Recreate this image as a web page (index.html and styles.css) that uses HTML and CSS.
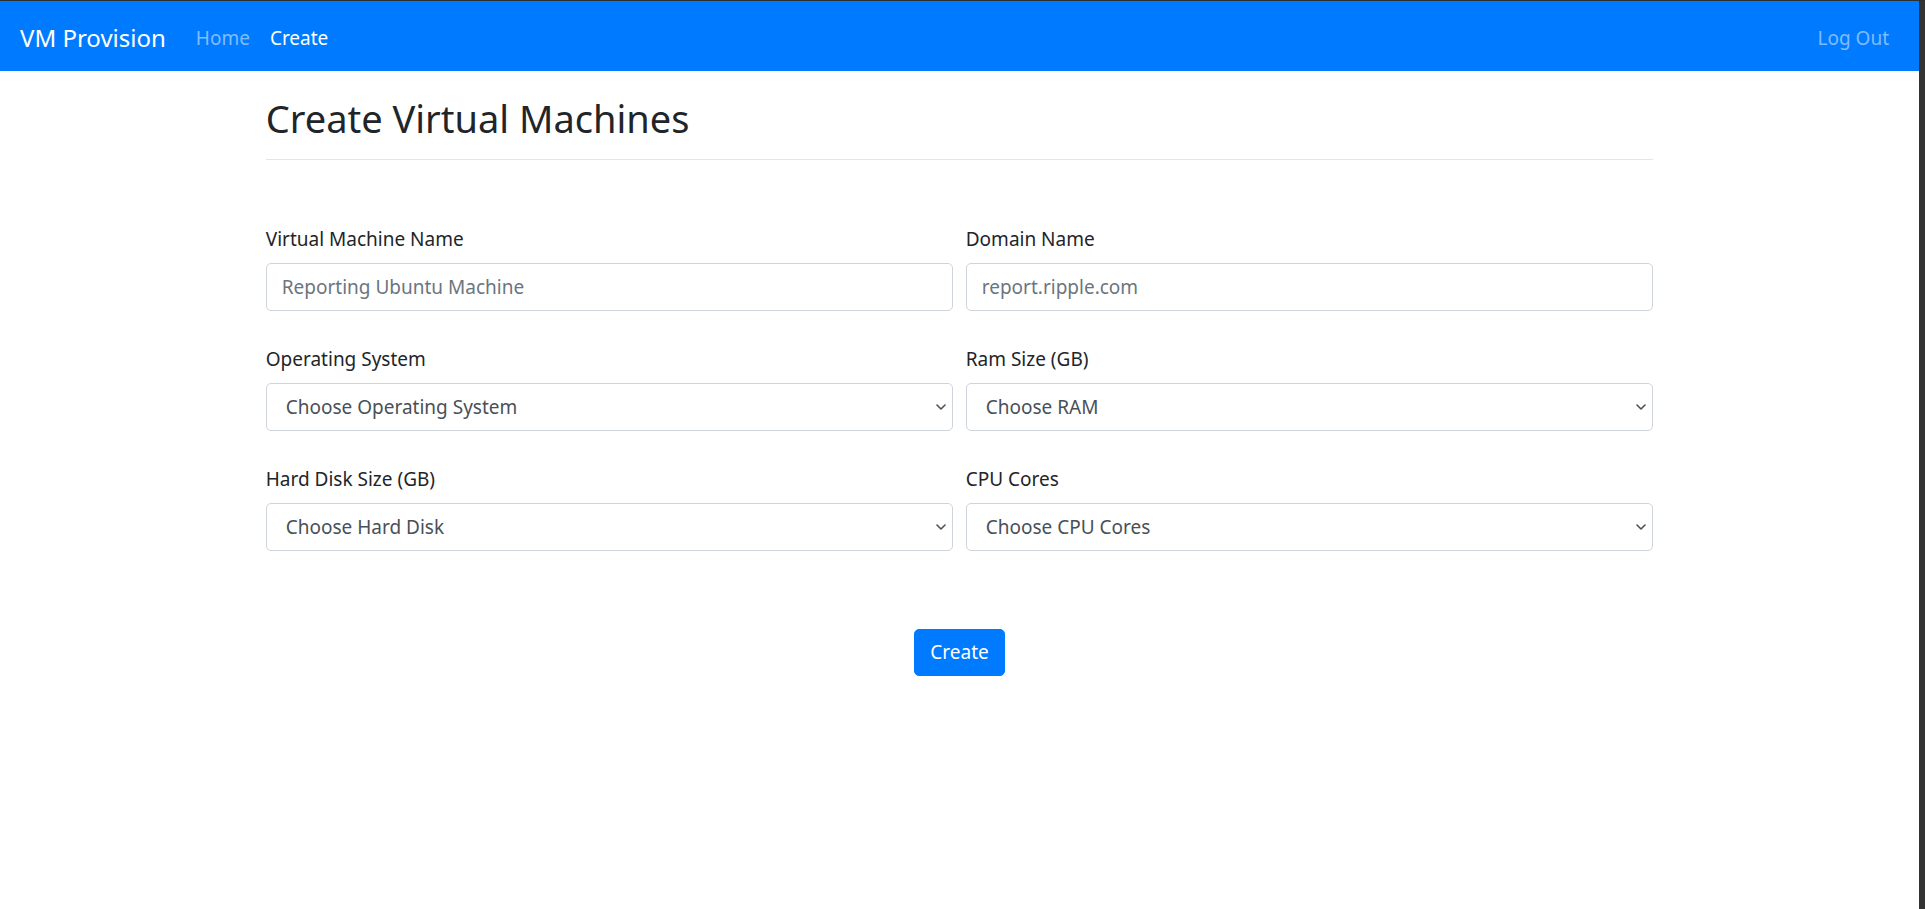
FILE: index.html
```html
<!DOCTYPE html>
<html lang="en">
<head>
<meta charset="utf-8">
<title>VM Provision</title>
<link rel="stylesheet" href="styles.css">
</head>
<body>
<div class="page">
  <nav class="navbar">
    <a class="brand" href="#">VM Provision</a>
    <a class="nav-link" href="#">Home</a>
    <a class="nav-link active" href="#">Create</a>
    <span class="spacer"></span>
    <a class="nav-link" href="#">Log Out</a>
  </nav>
  <main class="container">
    <h2 class="title">Create Virtual Machines</h2>
    <hr class="rule">
    <form class="form">
      <div class="grid">
        <div class="group">
          <label class="label" for="vmname">Virtual Machine Name</label>
          <input class="control" id="vmname" type="text" placeholder="Reporting Ubuntu Machine">
        </div>
        <div class="group">
          <label class="label" for="domain">Domain Name</label>
          <input class="control" id="domain" type="text" placeholder="report.ripple.com">
        </div>
        <div class="group">
          <label class="label" for="os">Operating System</label>
          <div class="select-wrap">
            <select class="control select" id="os"><option>Choose Operating System</option></select>
            <svg class="chev" viewBox="0 0 10 6" width="10" height="6"><path d="M1 1 L5 5 L9 1" fill="none" stroke="#495057" stroke-width="1.6" stroke-linecap="round" stroke-linejoin="round"/></svg>
          </div>
        </div>
        <div class="group">
          <label class="label" for="ram">Ram Size (GB)</label>
          <div class="select-wrap">
            <select class="control select" id="ram"><option>Choose RAM</option></select>
            <svg class="chev" viewBox="0 0 10 6" width="10" height="6"><path d="M1 1 L5 5 L9 1" fill="none" stroke="#495057" stroke-width="1.6" stroke-linecap="round" stroke-linejoin="round"/></svg>
          </div>
        </div>
        <div class="group">
          <label class="label" for="hdd">Hard Disk Size (GB)</label>
          <div class="select-wrap">
            <select class="control select" id="hdd"><option>Choose Hard Disk</option></select>
            <svg class="chev" viewBox="0 0 10 6" width="10" height="6"><path d="M1 1 L5 5 L9 1" fill="none" stroke="#495057" stroke-width="1.6" stroke-linecap="round" stroke-linejoin="round"/></svg>
          </div>
        </div>
        <div class="group">
          <label class="label" for="cpu">CPU Cores</label>
          <div class="select-wrap">
            <select class="control select" id="cpu"><option>Choose CPU Cores</option></select>
            <svg class="chev" viewBox="0 0 10 6" width="10" height="6"><path d="M1 1 L5 5 L9 1" fill="none" stroke="#495057" stroke-width="1.6" stroke-linecap="round" stroke-linejoin="round"/></svg>
          </div>
        </div>
      </div>
      <div class="actions">
        <button class="btn" type="button">Create</button>
      </div>
    </form>
  </main>
</div>
<div class="rail"></div>
</body>
</html>
```
FILE: styles.css
```css
* { box-sizing: border-box; }
html, body { margin: 0; padding: 0; }
body {
  display: flex;
  min-height: 100vh;
  border-top: 1px solid #2e2e2e;
  background: #fff;
  font-family: "Noto Sans", "Open Sans", sans-serif;
  font-size: 19px;
  color: #212529;
}
.page { flex: 1; min-width: 0; }
.rail { width: 6px; background: #333333; flex: none; }

.navbar {
  height: 70px;
  background: #007bff;
  display: flex;
  align-items: center;
  padding: 3px 20px 0;
}
.brand {
  color: #fff;
  font-size: 24px;
  line-height: 38px;
  text-decoration: none;
  margin-right: 20px;
}
.nav-link {
  color: rgba(255,255,255,.5);
  text-decoration: none;
  padding: 0 10px;
  font-size: 19px;
  line-height: 30px;
}
.nav-link.active { color: #fff; }
.spacer { flex: 1; }

.container {
  max-width: 1425px;
  margin: 0 auto;
  padding: 0 18.75px;
}
.title {
  margin: 23px 0 17px;
  font-size: 38px;
  line-height: 48px;
  font-weight: 400;
}
.rule {
  margin: 0;
  border: 0;
  border-top: 1px solid rgba(0,0,0,.1);
}
.form { padding-top: 64px; }
.grid {
  display: grid;
  grid-template-columns: 1fr 1fr;
  column-gap: 12.5px;
  row-gap: 33.5px;
}
.group { display: flex; flex-direction: column; }
.label {
  line-height: 30px;
  margin-bottom: 9px;
}
.control {
  height: 47.5px;
  width: 100%;
  border: 1px solid #ced4da;
  border-radius: 5px;
  padding: 0 15px;
  font-family: inherit;
  font-size: 19px;
  color: #495057;
  background: #fff;
}
.control::placeholder { color: #6c757d; }
.select-wrap { position: relative; }
.select {
  appearance: none;
  -webkit-appearance: none;
  padding-left: 19px;
}
.chev {
  position: absolute;
  right: 7px;
  top: 21px;
  pointer-events: none;
}
.actions {
  display: flex;
  justify-content: center;
  padding-top: 78px;
}
.btn {
  height: 47.5px;
  padding: 0 15px;
  background: #007bff;
  color: #fff;
  border: 1px solid #007bff;
  border-radius: 5px;
  font-family: inherit;
  font-size: 19px;
}
```
